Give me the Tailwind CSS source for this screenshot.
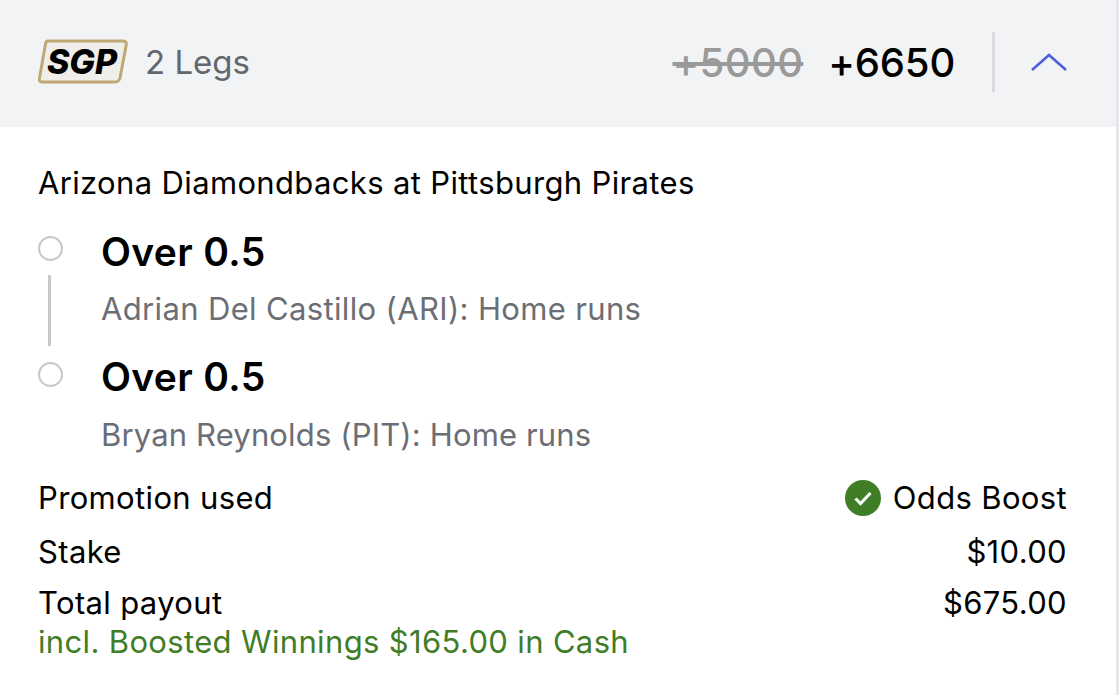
<!DOCTYPE html>
<html lang="en">
  <head>
    <meta charset="UTF-8" />
    <script src="https://cdn.jsdelivr.net/npm/@tailwindcss/browser@4"></script>
    <title>Bet slip</title>
  </head>
  <body class="bg-[#e6e7ea] font-['Inter',sans-serif] h-[695px] overflow-hidden">
    <div class="w-[1116px] h-[695px] bg-white">
      <!-- header -->
      <div class="h-[127px] bg-[#f2f3f5] flex items-center pl-[38px] pr-[48px]">
        <div class="w-[90px] h-[45px] flex items-center justify-center mt-[-4px]">
          <svg width="90" height="45" viewBox="0 0 90 45">
            <path d="M10 2 H85 Q89 2 88.200 6 L82 39 Q81 43 77 43 H4 Q0.500 43 1.500 39 L7.500 5 Q8 2 10 2 Z" fill="#efeeea" stroke="#bfa874" stroke-width="3" />
            <text x="44" y="35" text-anchor="middle" font-family="Inter, sans-serif" font-size="34" font-weight="800" font-style="italic" fill="#000">SGP</text>
          </svg>
        </div>
        <span class="ml-[17px] text-[33px] text-[#62666d] mt-[-2px]">2 Legs</span>
        <div class="ml-auto flex items-center">
          <span class="text-[40px] font-medium tracking-[0.4px] text-[#9a9a9a] line-through mt-[-2px]">+5000</span>
          <span class="ml-[25px] text-[40px] font-medium tracking-[-0.2px] text-black mt-[-2px]">+6650</span>
          <div class="ml-[37px] w-[3px] h-[60px] bg-[#d9dbe0] mt-[-4px]"></div>
          <svg class="ml-[35px] mt-[-4px]" width="38" height="20" viewBox="0 0 38 20" fill="none">
            <path d="M2 18 L19 3 L36 18" stroke="#4a5fdc" stroke-width="2.500" />
          </svg>
        </div>
      </div>

      <!-- legs -->
      <div class="pl-[38px] pr-[49px] text-black text-[31px] tracking-[0.35px]">
        <div class="pt-[38px] leading-[36px] h-[102px]">Arizona Diamondbacks at Pittsburgh Pirates</div>
        <div class="flex">
          <div class="w-[63px] flex flex-col items-start">
            <div class="w-[25px] h-[25px] rounded-full border-2 border-[#c8c8c8] mt-[7px]"></div>
            <div class="ml-[10px] mt-[14px] w-[3px] h-[71px] bg-[#c8c8c8]"></div>
            <div class="w-[25px] h-[25px] rounded-full border-2 border-[#c8c8c8] mt-[16px]"></div>
          </div>
          <div>
            <div class="text-[39px] leading-[46px] font-semibold">Over 0.5</div>
            <div class="leading-[36px] text-[#6b6e74] mt-[16px]">Adrian Del Castillo (ARI): Home runs</div>
            <div class="text-[39px] leading-[46px] font-semibold mt-[27px]">Over 0.5</div>
            <div class="leading-[36px] tracking-[0.15px] text-[#6b6e74] mt-[17px]">Bryan Reynolds (PIT): Home runs</div>
          </div>
        </div>

        <!-- summary -->
        <div class="mt-[27px] leading-[36px]">
          <div class="flex justify-between h-[54px]">
            <span>Promotion used</span>
            <span class="flex items-center h-[36px]">
              <svg width="36" height="36" viewBox="0 0 36 36" class="mr-[12px]">
                <circle cx="18" cy="18" r="18" fill="#3f7d27" />
                <path d="M10.500 18.500 L15.500 23.500 L25.500 13" fill="none" stroke="#fff" stroke-width="3" />
              </svg>
              Odds Boost
            </span>
          </div>
          <div class="flex justify-between h-[51px]">
            <span>Stake</span>
            <span>$10.00</span>
          </div>
          <div class="flex justify-between h-[39px]">
            <span>Total payout</span>
            <span>$675.00</span>
          </div>
          <div class="text-[#3f7d27]">incl. Boosted Winnings $165.00 in Cash</div>
        </div>
      </div>
    </div>
  </body>
</html>
